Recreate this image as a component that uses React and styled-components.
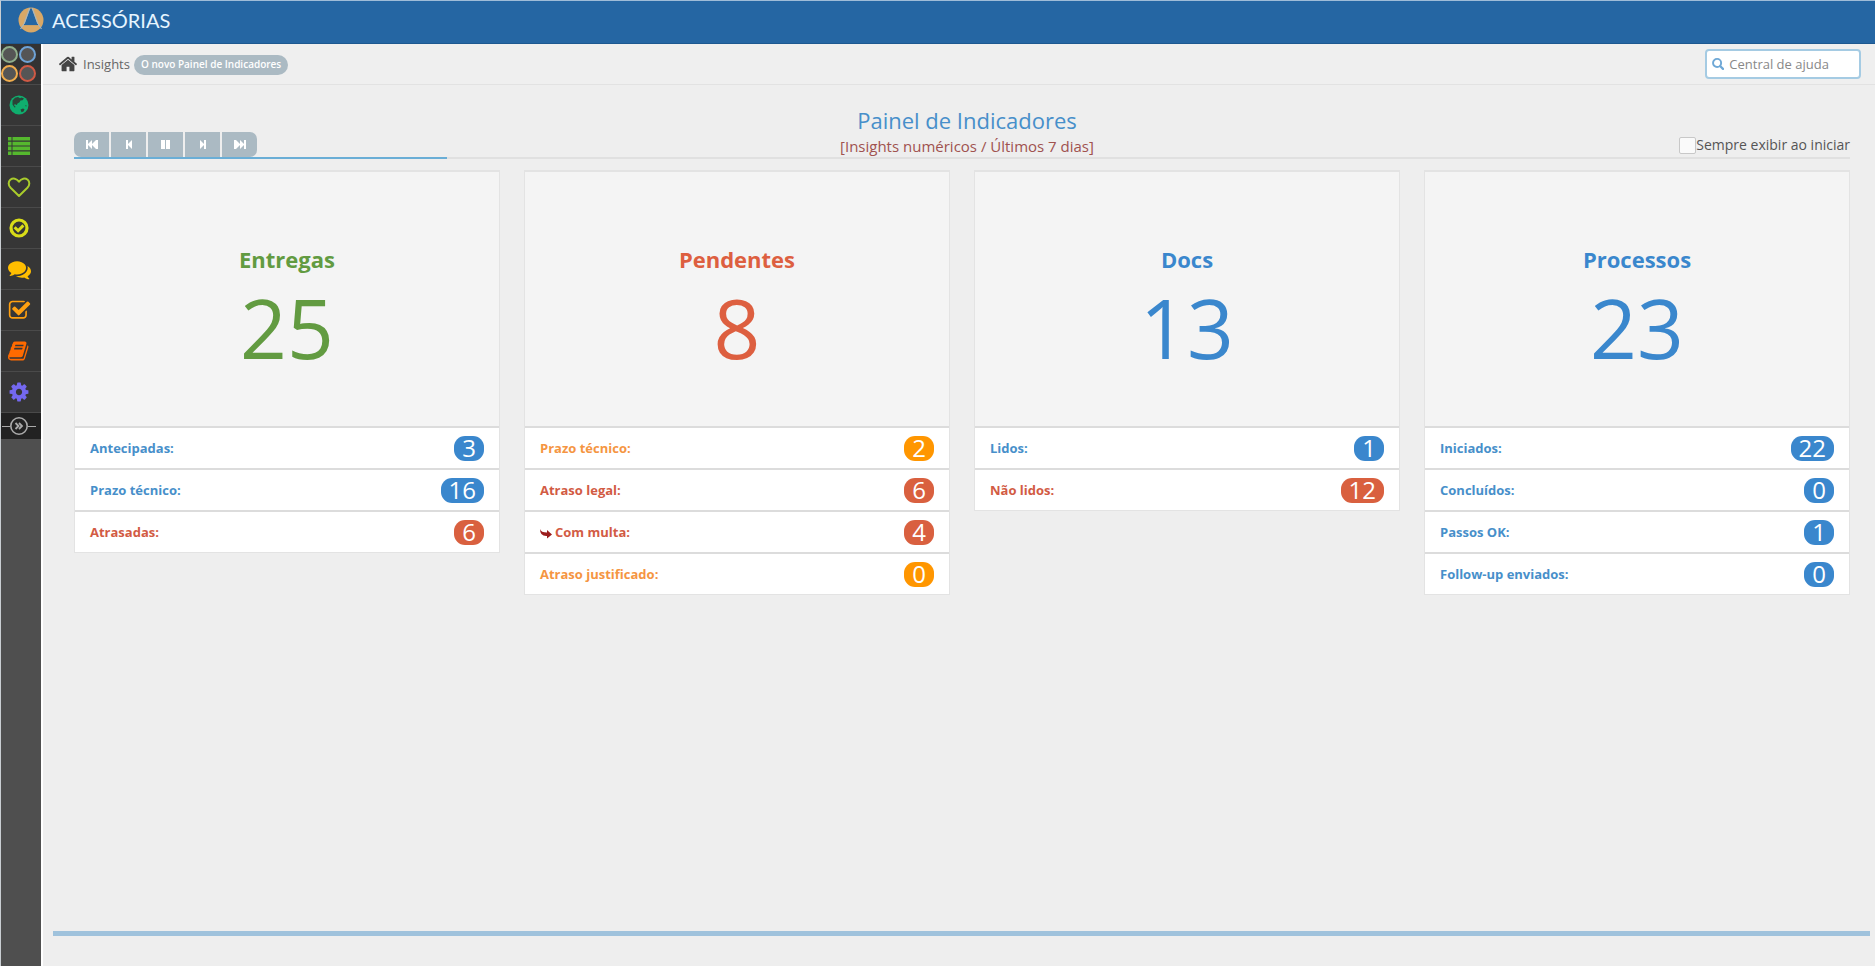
import React from 'react'
import styled, { createGlobalStyle } from 'styled-components'

const GlobalStyle = createGlobalStyle`
    *{
        box-sizing: border-box;
    }
    body{
        margin: 0;
        background-color: #eee;
        color: #555;
        font-family: 'Open Sans', 'Noto Sans', sans-serif;
        font-size: 13px;
    }
    svg{
        display: block;
        fill: currentColor;
    }
`

const colors = {
    blue: '#3a87cd',
    blueText: '#478fca',
    green: '#629b41',
    red: '#dd5f40',
    redBadge: '#d9603f',
    orange: '#ff9600',
    orangeText: '#f59542',
}

const StyledPage = styled.div`
    min-height: 100vh;
    display: flex;
    flex-direction: column;
    border-top: 1px solid #9fbcd8;
    border-left: 1px solid #c9ced2;
`
const StyledHeader = styled.header`
    height: 43px;
    padding: 0 18px 4px 17px;
    display: flex;
    align-items: center;
    background-color: #2566a3;
    border-bottom: 1px solid #1d5890;
`
const StyledBrand = styled.a`
    display: flex;
    align-items: center;
    gap: 8px;
    color: #e6f5ff;
    font-family: Lato, sans-serif;
    font-size: 20px;
    line-height: 24px;
    text-decoration: none;
`
const StyledBody = styled.div`
    flex: 1;
    display: flex;
`
const StyledSidebar = styled.aside`
    width: 42px;
    flex: none;
    background-color: #4f4f4f;
    border-right: 2px solid #fff;
`
const StyledShortcuts = styled.div`
    height: 41px;
    padding: 2px 4px 2px 0;
    display: grid;
    grid-template-columns: 17px 17px;
    gap: 2px 1px;
    background-color: #333;
    border-bottom: 1px solid #4a4a4a;
`
const StyledShortcut = styled.button`
    width: 17px;
    height: 17px;
    padding: 0;
    background-color: #555;
    border: 2px solid ${({ $color }) => $color};
    border-radius: 50%;
`
const StyledMenuItem = styled.a`
    height: 41px;
    padding-right: 4px;
    display: flex;
    align-items: center;
    justify-content: center;
    color: ${({ $color }) => $color};
    background-color: #363636;
    border-bottom: 1px solid #4a4a4a;
`
const StyledCollapse = styled.button`
    width: 100%;
    height: 26px;
    padding: 0 4px 0 0;
    display: flex;
    align-items: center;
    justify-content: center;
    color: #aaa;
    background-color: #222;
    border: 0;
`
const StyledMain = styled.main`
    flex: 1;
    min-width: 0;
    display: flex;
    flex-direction: column;
`
const StyledBreadcrumbs = styled.nav`
    height: 41px;
    padding: 0 14px 0 15px;
    display: flex;
    align-items: center;
    background-color: #efefef;
    border-bottom: 1px solid #e2e2e2;
`
const StyledHome = styled.a`
    margin-right: 5px;
    color: #444;
`
const StyledCrumb = styled.span`
    color: #666;
`
const StyledPill = styled.a`
    height: 20px;
    margin: 2px 0 0 4px;
    padding: 0 7px;
    border-radius: 10px;
    background-color: #abbac3;
    color: #fff;
    font-size: 10px;
    font-weight: 600;
    line-height: 19px;
    text-decoration: none;
`
const StyledSearch = styled.label`
    width: 156px;
    height: 30px;
    margin-left: auto;
    padding: 0 5px;
    display: flex;
    align-items: center;
    gap: 5px;
    color: #6fa8d6;
    background-color: #fff;
    border: 2px solid #a5cbe3;
    border-radius: 4px;
    input{
        width: 100%;
        padding: 0;
        border: 0;
        outline: 0;
        background: none;
        color: #666;
        font: inherit;
    }
    input::placeholder{
        color: #888;
        opacity: 1;
    }
`
const StyledPanel = styled.section`
    padding: 19px 25px 0 31px;
`
const StyledToolbar = styled.div`
    display: grid;
    grid-template-columns: 1fr auto 1fr;
    align-items: end;
`
const StyledPlayer = styled.div`
    display: flex;
    gap: 2px;
`
const StyledPlayerButton = styled.button`
    width: 35px;
    height: 25px;
    padding: 0;
    display: flex;
    align-items: center;
    justify-content: center;
    color: #fff;
    background-color: #abbac3;
    border: 0;
    &:first-child{
        border-radius: 7px 0 0 7px;
    }
    &:last-child{
        border-radius: 0 7px 7px 0;
    }
`
const StyledTitles = styled.div`
    padding-left: 10px;
    text-align: center;
`
const StyledTitle = styled.h1`
    margin: 0;
    color: ${colors.blueText};
    font-size: 22px;
    font-weight: 400;
    line-height: 32px;
`
const StyledSubtitle = styled.h2`
    margin: 0;
    color: #a0524f;
    font-size: 15px;
    font-weight: 400;
    line-height: 21px;
`
const StyledOption = styled.label`
    justify-self: end;
    display: flex;
    align-items: center;
    font-size: 14px;
    line-height: 24px;
    input{
        appearance: none;
        width: 17px;
        height: 17px;
        margin: 0;
        background-color: #fafafa;
        border: 1px solid #c8c8c8;
        border-radius: 2px;
    }
`
const StyledProgress = styled.div`
    height: 2px;
    margin-bottom: 11px;
    background-color: #e0e0e0;
    div{
        width: 21%;
        height: 100%;
        background-color: #6aaed6;
    }
`
const StyledCards = styled.div`
    display: grid;
    grid-template-columns: repeat(4, 1fr);
    align-items: start;
    gap: 24px;
`
const StyledCard = styled.article`
    border: 2px solid #e3e3e3;
    border-width: 2px 1px 1px;
`
const StyledSummary = styled.div`
    height: 254px;
    padding-top: 71px;
    background-color: #f4f4f4;
    color: ${({ $color }) => $color};
    text-align: center;
    h3{
        margin: 0;
        font-size: 22px;
        font-weight: 700;
        line-height: 32px;
    }
    p{
        margin: 0;
        font-size: 82px;
        line-height: 104px;
    }
`
const StyledRow = styled.div`
    height: 42px;
    padding: 0 15px;
    display: flex;
    align-items: center;
    justify-content: space-between;
    background-color: #fff;
    border-top: 2px solid #dcdcdc;
`
const StyledLabel = styled.span`
    display: flex;
    align-items: center;
    gap: 3px;
    color: ${({ $color }) => $color};
    font-weight: 700;
`
const StyledBadge = styled.span`
    height: 25px;
    padding: 0 8px;
    border-radius: 11px;
    background-color: ${({ $color }) => $color};
    color: #fff;
    font-size: 24px;
    line-height: 24px;
`
const StyledFooter = styled.footer`
    height: 35px;
    margin: auto 5px 0 10px;
    border-top: 5px solid #9fc2dc;
`

const Icon = ({ size = 22, box = 1792, children }) => (
    <svg width={size} height={size} viewBox={`0 0 ${box} ${box}`} aria-hidden="true">{children}</svg>
)

const GlobeIcon = () => (
    <Icon size={20} box={20}>
        <circle cx="10" cy="10" r="9.5" />
        <path fill="#2b4438" d="M3.500 5.500L6 2.800 9 2l2 1.200 1.500-.6 2.500.8-1.500 1.800-2 .3-1.200 2-1.600.8-.9 1.700-2.200-1-.4 1.800 1.600 1.300-1.300.4L3.500 9.600z" />
        <path fill="#2b4438" d="M11.500 14.500l2.500-1 1.500.7-1 2.300-2 .8zM16 10.500l1.500-.3-.3 1.600z" />
    </Icon>
)
const ListIcon = () => (
    <Icon size={24} box={24}>
        <path d="M1 3h3.500v3.600H1zM5.500 3H23v3.600H5.500zM1 7.800h3.500v3.600H1zM5.500 7.800H23v3.600H5.500zM1 12.600h3.500v3.600H1zM5.500 12.600H23v3.600H5.500zM1 17.400h3.500V21H1zM5.500 17.400H23V21H5.500z" />
    </Icon>
)
const HeartIcon = () => (
    <Icon size={24} box={24}>
        <path fill="none" stroke="currentColor" strokeWidth="2" strokeLinejoin="round" d="M12 21L3.600 12.800C1 10 1.200 6.600 3.300 4.800 6 2.700 9.500 3.300 12 6.700c2.500-3.400 6-4 8.700-1.900 2.100 1.800 2.300 5.200-.3 8z" />
    </Icon>
)
const CheckIcon = () => (
    <Icon size={22} box={22}>
        <circle cx="11" cy="11" r="8" fill="none" stroke="currentColor" strokeWidth="3.200" />
        <path fill="none" stroke="currentColor" strokeWidth="3" d="M6.600 10.200l3.500 3.500 5.300-5.300" />
    </Icon>
)
const CommentsIcon = () => (
    <Icon size={23}>
        <path d="M1408 768q0 139-94 257t-256.500 186.500-353.500 68.500q-86 0-176-16-124 88-278 128-36 9-86 16h-3q-11 0-20.500-8t-11.500-21q-1-3-1-6.500t.5-6.500 2-6l2.500-5 3.500-5.500 4-5 4.500-5 4-4.500q5-6 23-25t26-29.500 22.500-29 25-38.500 20.500-44q-124-72-195-177t-71-224q0-139 94-257t256.500-186.500 353.500-68.500 353.500 68.500 256.500 186.500 94 257zm384 256q0 120-71 224.500t-195 176.500q10 24 20.500 44t25 38.500 22.500 29 26 29.500 23 25q1 1 4 4.500t4.500 5 4 5 3.500 5.500l2.500 5 2 6 .5 6.500-1 6.500q-3 14-13 22t-22 7q-50-7-86-16-154-40-278-128-90 16-176 16-271 0-472-132 58 4 88 4 161 0 309-45t264-129q125-92 192-212t67-254q0-77-23-152 129 71 204 178t75 230z" />
    </Icon>
)
const TaskIcon = () => (
    <Icon size={23}>
        <path d="M1472 930v318q0 119-84.500 203.500t-203.500 84.500h-832q-119 0-203.500-84.500t-84.500-203.500v-832q0-119 84.500-203.500t203.500-84.500h832q63 0 117 25 15 7 18 23 3 17-9 29l-49 49q-10 10-23 10-3 0-9-2-23-6-45-6h-832q-66 0-113 47t-47 113v832q0 66 47 113t113 47h832q66 0 113-47t47-113v-254q0-13 9-22l64-64q10-10 23-10 6 0 12 3 20 8 20 29zm231-489l-814 814q-24 24-57 24t-57-24l-430-430q-24-24-24-57t24-57l110-110q24-24 57-24t57 24l263 263 647-647q24-24 57-24t57 24l110 110q24 24 24 57t-24 57z" />
    </Icon>
)
const BookIcon = () => (
    <Icon size={22}>
        <path d="M1639 478q40 57 18 129l-275 906q-19 64-76.500 107.500t-122.500 43.500h-923q-77 0-148.500-53.500t-99.500-131.500q-24-67-2-127 0-4 3-27t4-37q1-8-3-21.500t-3-19.500q2-11 8-21t16.500-23.500 16.500-23.500q23-38 45-91.500t30-91.500q3-10 .5-30t-.5-28q3-11 17-28t17-23q21-36 42-92t25-90q1-9-2.500-32t.5-28q4-13 22-30.500t22-22.500q19-26 42.500-84.500t27.500-96.500q1-8-3-25.500t-2-26.500q2-8 9-18t18-23 17-21q8-12 16.500-30.500t15-35 16-36 19.500-32 26.500-23.500 36-11.500 47.500 5.500l-1 3q38-9 51-9h761q74 0 114 56t18 130l-274 906q-36 119-71.500 153.500t-128.500 34.500h-869q-27 0-38 15-11 16-1 43 24 70 144 70h923q29 0 56-15.500t35-41.500l300-987q7-22 5-57 38 15 59 43zm-1064 2q-4 13 2 22.500t20 9.500h608q13 0 25.500-9.500t16.500-22.500l21-64q4-13-2-22.500t-20-9.500h-608q-13 0-25.500 9.500t-16.500 22.500zm-83 256q-4 13 2 22.500t20 9.500h608q13 0 25.500-9.500t16.500-22.500l21-64q4-13-2-22.500t-20-9.500h-608q-13 0-25.500 9.500t-16.500 22.500z" />
    </Icon>
)
const CogIcon = () => (
    <Icon size={22}>
        <path d="M1152 896q0-106-75-181t-181-75-181 75-75 181 75 181 181 75 181-75 75-181zm512-109v222q0 12-8 23t-20 13l-185 28q-19 54-39 91 35 50 107 138 10 12 10 25t-9 23q-27 37-99 108t-94 71q-12 0-26-9l-138-108q-44 23-91 38-16 136-29 186-7 28-36 28h-222q-14 0-24.500-8.500t-11.500-21.500l-28-184q-49-16-90-37l-141 107q-10 9-25 9-14 0-25-11-126-114-165-168-7-10-7-23 0-12 8-23 15-21 51-66.500t54-70.500q-27-50-41-99l-183-27q-13-2-21-12.500t-8-23.500v-222q0-12 8-23t19-13l186-28q14-46 39-92-40-57-107-138-10-12-10-24 0-10 9-23 26-36 98.500-107.500t94.500-71.500q13 0 26 10l138 107q44-23 91-38 16-136 29-186 7-28 36-28h222q14 0 24.500 8.500t11.500 21.500l28 184q49 16 90 37l142-107q9-9 24-9 13 0 25 10 129 119 165 170 7 8 7 22 0 12-8 23-15 21-51 66.500t-54 70.500q26 50 41 98l183 28q13 2 21 12.500t8 23.500z" />
    </Icon>
)
const HomeIcon = () => (
    <Icon size={20}>
        <path d="M1472 992v480q0 26-19 45t-45 19h-384v-384h-256v384h-384q-26 0-45-19t-19-45v-480q0-1 .5-3t.5-3l575-474 575 474q1 2 1 6zm223-69l-62 74q-8 9-21 11h-3q-13 0-21-7l-692-577-692 577q-12 8-24 7-13-2-21-11l-62-74q-8-10-7-23.500t11-21.500l719-599q32-26 76-26t76 26l244 204v-195q0-14 9-23t23-9h192q14 0 23 9t9 23v408l219 182q10 8 11 21.500t-7 23.500z" />
    </Icon>
)
const SearchIcon = () => (
    <Icon size={14} box={14}>
        <circle cx="5.800" cy="5.800" r="4.600" fill="none" stroke="currentColor" strokeWidth="2.200" />
        <path stroke="currentColor" strokeWidth="2.600" strokeLinecap="round" d="M9.500 9.500l3 3" />
    </Icon>
)
const LogoIcon = () => (
    <Icon size={26} box={26}>
        <circle cx="13" cy="13" r="12.500" fill="#d9a866" />
        <path fill="#2566a3" d="M12 1.500h2L19.500 17h-13z" />
        <path fill="none" stroke="#a9b6bb" strokeWidth="1.200" d="M11.800 1L6 17l-3.500 5M14.200 1L20 17l3.500 5" />
        <path fill="none" stroke="#2566a3" strokeWidth="1.200" d="M6 17.500h14" />
    </Icon>
)
const CollapseIcon = () => (
    <svg width="34" height="20" viewBox="0 0 34 20" aria-hidden="true">
        <g fill="none" stroke="currentColor">
            <path strokeWidth="1" d="M0 10.500h8M26 10.500h8" />
            <circle cx="17" cy="10" r="8.200" strokeWidth="1.600" />
            <path strokeWidth="1.800" d="M13.500 7L16.500 10l-3 3M17 7l3 3-3 3" />
        </g>
    </svg>
)
const ArrowIcon = () => (
    <svg width="12" height="14" viewBox="0 0 12 14" aria-hidden="true">
        <path fill="#9b1c1c" d="M0 4q1 3.500 7 3.500V5L12 9.500 7 13.500V11Q0 11.500 0 4z" />
    </svg>
)

// 12x9 glyphs of the slide controls
const player = [
    { label: 'Primeiro', path: 'M0 0h2v4l4-4v4l4-4h2v9h-2L6 5v4L2 5v4H0z' },
    { label: 'Anterior', path: 'M3 0h2v4l4-4v9L5 5v4H3z' },
    { label: 'Pausar', path: 'M1 0h4v9H1zM6 0h4v9H6z' },
    { label: 'Próximo', path: 'M9 0H7v4L3 0v9l4-4v4h2z' },
    { label: 'Último', path: 'M12 0h-2v4L6 0v4L2 0H0v9h2l4-4v4l4-4v4h2z' },
]

const shortcuts = [
    { label: 'Empresas', color: '#8fae8b' },
    { label: 'Contatos', color: '#6fa3d6' },
    { label: 'Tarefas', color: '#f0ad4e' },
    { label: 'Alertas', color: '#cf5a45' },
]

const menu = [
    { label: 'Portal', color: '#0fae6e', icon: GlobeIcon },
    { label: 'Lista', color: '#55b82e', icon: ListIcon },
    { label: 'Favoritos', color: '#a9cc2c', icon: HeartIcon },
    { label: 'Entregas', color: '#d8dc18', icon: CheckIcon },
    { label: 'Mensagens', color: '#ffbe00', icon: CommentsIcon },
    { label: 'Processos', color: '#ffa010', icon: TaskIcon },
    { label: 'Documentos', color: '#ff6a00', icon: BookIcon },
    { label: 'Configurações', color: '#7468f0', icon: CogIcon },
]

const tones = {
    blue: { text: colors.blueText, badge: colors.blue },
    red: { text: '#d25b44', badge: colors.redBadge },
    orange: { text: colors.orangeText, badge: colors.orange },
}

const cards = [
    {
        title: 'Entregas', total: 25, color: colors.green, rows: [
            { label: 'Antecipadas:', value: 3, tone: 'blue' },
            { label: 'Prazo técnico:', value: 16, tone: 'blue' },
            { label: 'Atrasadas:', value: 6, tone: 'red' },
        ],
    },
    {
        title: 'Pendentes', total: 8, color: colors.red, rows: [
            { label: 'Prazo técnico:', value: 2, tone: 'orange' },
            { label: 'Atraso legal:', value: 6, tone: 'red' },
            { label: 'Com multa:', value: 4, tone: 'red', nested: true },
            { label: 'Atraso justificado:', value: 0, tone: 'orange' },
        ],
    },
    {
        title: 'Docs', total: 13, color: colors.blue, rows: [
            { label: 'Lidos:', value: 1, tone: 'blue' },
            { label: 'Não lidos:', value: 12, tone: 'red' },
        ],
    },
    {
        title: 'Processos', total: 23, color: colors.blue, rows: [
            { label: 'Iniciados:', value: 22, tone: 'blue' },
            { label: 'Concluídos:', value: 0, tone: 'blue' },
            { label: 'Passos OK:', value: 1, tone: 'blue' },
            { label: 'Follow-up enviados:', value: 0, tone: 'blue' },
        ],
    },
]

const Card = ({ title, total, color, rows }) => {
    return (
        <StyledCard>
            <StyledSummary $color={color}>
                <h3>{title}</h3>
                <p>{total}</p>
            </StyledSummary>
            {rows.map(({ label, value, tone, nested }) => (
                <StyledRow key={label}>
                    <StyledLabel $color={tones[tone].text}>
                        {nested && <ArrowIcon />}
                        {label}
                    </StyledLabel>
                    <StyledBadge $color={tones[tone].badge}>{value}</StyledBadge>
                </StyledRow>
            ))}
        </StyledCard>
    )
}

const Sidebar = () => {
    return (
        <StyledSidebar>
            <StyledShortcuts>
                {shortcuts.map(({ label, color }) => (
                    <StyledShortcut key={label} type="button" aria-label={label} $color={color} />
                ))}
            </StyledShortcuts>
            <nav>
                {menu.map(({ label, color, icon: MenuIcon }) => (
                    <StyledMenuItem key={label} href="#" aria-label={label} $color={color}>
                        <MenuIcon />
                    </StyledMenuItem>
                ))}
            </nav>
            <StyledCollapse type="button" aria-label="Expandir menu"><CollapseIcon /></StyledCollapse>
        </StyledSidebar>
    )
}

const App = () => {
    return (
        <StyledPage>
            <GlobalStyle />
            <StyledHeader>
                <StyledBrand href="#"><LogoIcon />ACESSÓRIAS</StyledBrand>
            </StyledHeader>
            <StyledBody>
                <Sidebar />
                <StyledMain>
                    <StyledBreadcrumbs>
                        <StyledHome href="#" aria-label="Início"><HomeIcon /></StyledHome>
                        <StyledCrumb>Insights</StyledCrumb>
                        <StyledPill href="#">O novo Painel de Indicadores</StyledPill>
                        <StyledSearch>
                            <SearchIcon />
                            <input type="text" placeholder="Central de ajuda" aria-label="Central de ajuda" />
                        </StyledSearch>
                    </StyledBreadcrumbs>
                    <StyledPanel>
                        <StyledToolbar>
                            <StyledPlayer>
                                {player.map(({ label, path }) => (
                                    <StyledPlayerButton key={label} type="button" aria-label={label}>
                                        <svg width="12" height="9" viewBox="0 0 12 9"><path d={path} /></svg>
                                    </StyledPlayerButton>
                                ))}
                            </StyledPlayer>
                            <StyledTitles>
                                <StyledTitle>Painel de Indicadores</StyledTitle>
                                <StyledSubtitle>[Insights numéricos / Últimos 7 dias]</StyledSubtitle>
                            </StyledTitles>
                            <StyledOption>
                                <input type="checkbox" />
                                Sempre exibir ao iniciar
                            </StyledOption>
                        </StyledToolbar>
                        <StyledProgress><div /></StyledProgress>
                        <StyledCards>
                            {cards.map((card) => <Card key={card.title} {...card} />)}
                        </StyledCards>
                    </StyledPanel>
                    <StyledFooter />
                </StyledMain>
            </StyledBody>
        </StyledPage>
    )
}

export default App
